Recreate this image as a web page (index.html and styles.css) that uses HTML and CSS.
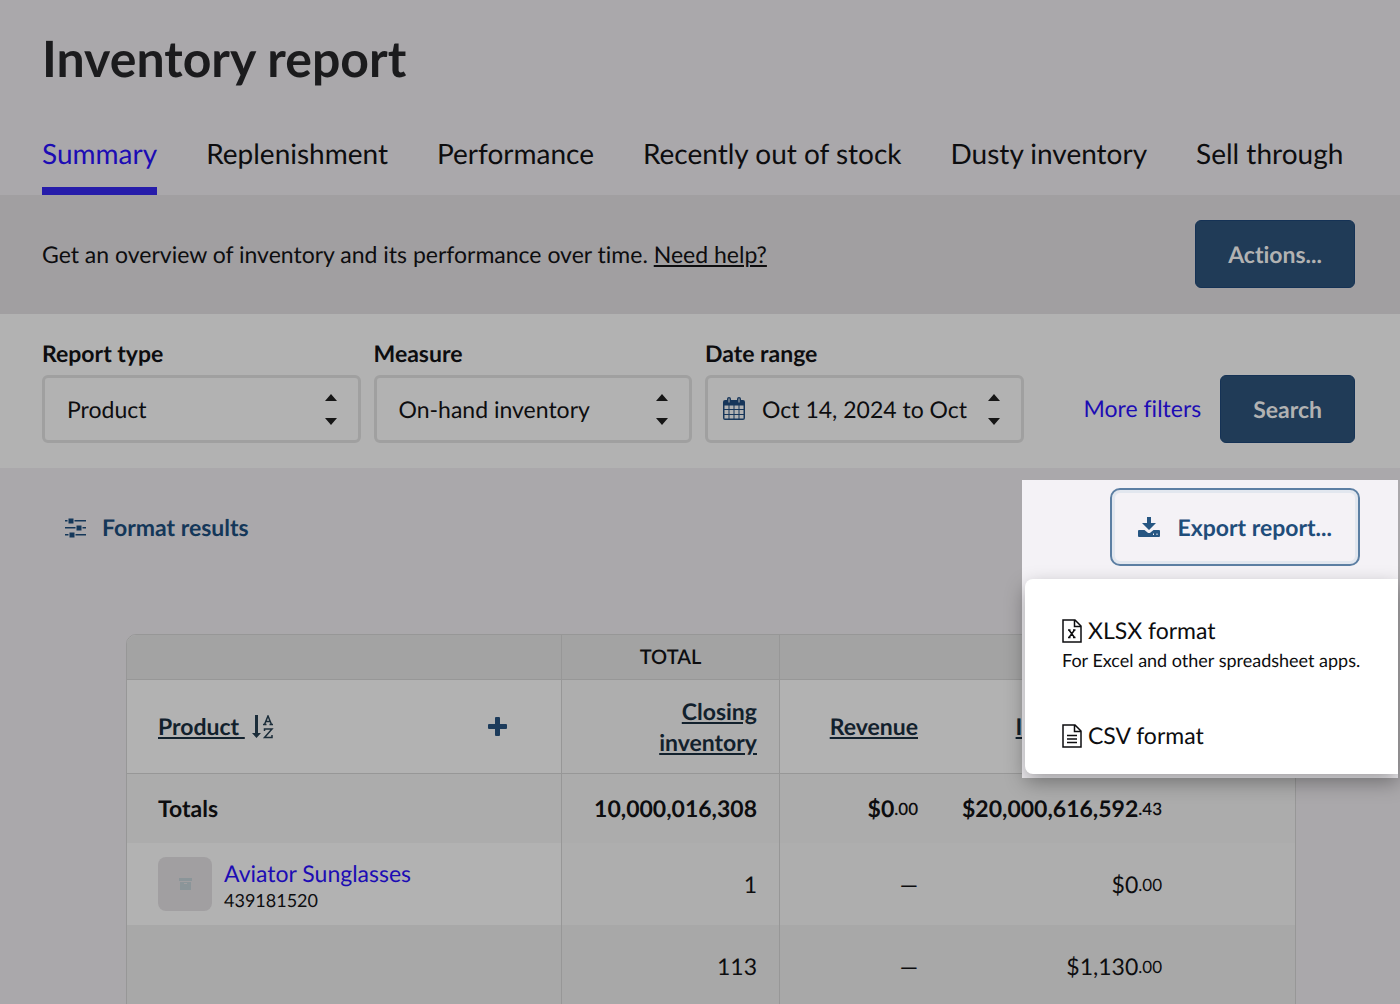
FILE: index.html
```
<!DOCTYPE html>
<html lang="en">
<head>
  <meta charset="UTF-8">
  <meta name="viewport" content="width=device-width, initial-scale=1.0">
  <title>Inventory report</title>
  <link rel="stylesheet" href="styles.css">
</head>
<body>
  <header class="page-header">
    <h1>Inventory report</h1>
    <nav class="tabs">
      <a href="#" class="active">Summary</a>
      <a href="#">Replenishment</a>
      <a href="#">Performance</a>
      <a href="#">Recently out of stock</a>
      <a href="#">Dusty inventory</a>
      <a href="#">Sell through</a>
    </nav>
  </header>

  <section class="intro">
    <p>Get an overview of inventory and its performance over time. <a href="#">Need help?</a></p>
    <button class="btn" type="button">Actions...</button>
  </section>

  <form class="filters">
    <div class="fields">
      <div class="field">
        <label for="report-type">Report type</label>
        <div class="select">
          <select id="report-type"><option>Product</option></select>
          <svg class="arrows" width="12" height="32" viewBox="0 0 12 32"><path d="M0 7L6 0l6 7zM0 24h12l-6 7z"/></svg>
        </div>
      </div>
      <div class="field">
        <label for="measure">Measure</label>
        <div class="select">
          <select id="measure"><option>On-hand inventory</option></select>
          <svg class="arrows" width="12" height="32" viewBox="0 0 12 32"><path d="M0 7L6 0l6 7zM0 24h12l-6 7z"/></svg>
        </div>
      </div>
      <div class="field">
        <label for="date-range">Date range</label>
        <div class="select with-icon">
          <svg class="calendar" width="22" height="24" viewBox="0 0 22 24">
            <path fill-rule="evenodd" d="M2 3h2V2a2 2 0 0 1 4 0v1h6V2a2 2 0 0 1 4 0v1h2a2 2 0 0 1 2 2v16a2 2 0 0 1-2 2H2a2 2 0 0 1-2-2V5a2 2 0 0 1 2-2zM1.500 8.500v3.500h4V8.500zM6.500 8.500v3.500h4V8.500zM11.500 8.500v3.500h4V8.500zM16.500 8.500v3.500h4V8.500zM1.500 13v4h4v-4zM6.500 13v4h4v-4zM11.500 13v4h4v-4zM16.500 13v4h4v-4zM1.500 18v3.500h4V18zM6.500 18v3.500h4V18zM11.500 18v3.500h4V18zM16.500 18v3.500h4V18zM5.500 1.500v4h1v-4zM15.500 1.500v4h1v-4z"/>
          </svg>
          <select id="date-range"><option>Oct 14, 2024 to Oct</option></select>
          <svg class="arrows" width="12" height="32" viewBox="0 0 12 32"><path d="M0 7L6 0l6 7zM0 24h12l-6 7z"/></svg>
        </div>
      </div>
    </div>
    <div class="filter-actions">
      <a href="#">More filters</a>
      <button class="btn" type="button">Search</button>
    </div>
  </form>

  <main class="results">
    <button class="format" type="button">
      <svg width="21" height="20" viewBox="0 0 21 20">
        <path d="M0 2h21v1.500H0zM0 9h21v1.500H0zM0 16h21v1.500H0z"/>
        <path class="knob" d="M3 0h6v6H3zM11 7h6v6h-6zM4 14h6v6H4z"/>
      </svg>
      Format results
    </button>

    <div class="export">
      <button class="export-btn" type="button">
        <svg width="22" height="20" viewBox="0 0 22 20">
          <path d="M9 0h4v6h5l-7 7-7-7h5z"/>
          <path fill-rule="evenodd" d="M1 13h5.500l3 2.500q1.500 1 3 0l3-2.500H21a1 1 0 0 1 1 1v5a1 1 0 0 1-1 1H1a1 1 0 0 1-1-1v-5a1 1 0 0 1 1-1zM15 16.500v1.500H16v-1.500zM18.500 16.500v1.500h1v-1.500z"/>
        </svg>
        Export report...
      </button>
      <div class="menu">
        <a href="#">
          <svg width="20" height="24" viewBox="0 0 20 24">
            <path d="M1 1h12l6 6v16H1zM12.500 1v6.500H19"/>
            <path d="M6 11h2.500M11 11h2.500M6 18.500h2.500M11 18.500h2.500M7 11l5.500 7.500M12.500 11L7 18.500"/>
          </svg>
          XLSX format
        </a>
        <p>For Excel and other spreadsheet apps.</p>
        <a href="#">
          <svg width="20" height="24" viewBox="0 0 20 24">
            <path d="M1 1h12l6 6v16H1zM12.500 1v6.500H19"/>
            <path d="M5 11.500h10M5 15h10M5 18.500h10"/>
          </svg>
          CSV format
        </a>
      </div>
    </div>

    <table>
      <colgroup>
        <col class="col-product">
        <col class="col-closing">
        <col class="col-revenue">
        <col class="col-cost">
        <col class="col-rest">
      </colgroup>
      <thead>
        <tr class="groups">
          <th></th>
          <th>TOTAL</th>
          <th colspan="3"></th>
        </tr>
        <tr class="columns">
          <th>
            <div class="product-head">
              <a href="#">Product&nbsp;</a>
              <svg class="sort" width="22" height="24" viewBox="0 0 22 24">
                <path d="M3 0h3v18h3l-4.500 5L0 18h3z"/>
                <path class="line" d="M12.500 9.500L16 1l3.500 8.500M13.500 6.500h5M11 9.500h3.500M17.500 9.500H21M12.500 16v-2H20l-7.500 8.500H20v-2.500"/>
              </svg>
              <button class="add" type="button" aria-label="Add column">
                <svg width="19" height="19" viewBox="0 0 19 19"><path d="M8 0h3a1 1 0 0 1 1 1v6h6a1 1 0 0 1 1 1v3a1 1 0 0 1-1 1h-6v6a1 1 0 0 1-1 1H8a1 1 0 0 1-1-1v-6H1a1 1 0 0 1-1-1V8a1 1 0 0 1 1-1h6V1a1 1 0 0 1 1-1z"/></svg>
              </button>
            </div>
          </th>
          <th><a href="#">Closing<br>inventory</a></th>
          <th><a href="#">Revenue</a></th>
          <th><a href="#">Inventory cost</a></th>
          <th></th>
        </tr>
      </thead>
      <tbody>
        <tr class="totals">
          <th>Totals</th>
          <td>10,000,016,308</td>
          <td>$0<small>.00</small></td>
          <td>$20,000,616,592<small>.43</small></td>
          <td></td>
        </tr>
        <tr>
          <td>
            <div class="product">
              <span class="thumb">
                <svg width="13" height="12" viewBox="0 0 13 12"><path fill-rule="evenodd" d="M0 0h13v3H0zM1 4h11v8H1zM5 5v1h3V5z"/></svg>
              </span>
              <div>
                <a href="#">Aviator Sunglasses</a>
                <span class="sku">439181520</span>
              </div>
            </div>
          </td>
          <td>1</td>
          <td>—</td>
          <td>$0<small>.00</small></td>
          <td></td>
        </tr>
        <tr class="alt">
          <td></td>
          <td>113</td>
          <td>—</td>
          <td>$1,130<small>.00</small></td>
          <td></td>
        </tr>
      </tbody>
    </table>
  </main>
</body>
</html>
```
FILE: styles.css
```
* {
  box-sizing: border-box;
}

body {
  margin: 0;
  font-family: Lato, "Liberation Sans", sans-serif;
  font-size: 23px;
  line-height: 31px;
  font-variant-ligatures: none;
  text-rendering: geometricPrecision;
  color: #0d0d0f;
  background-color: #aaa8ab;
}

button, select {
  font: inherit;
  font-variant-ligatures: none;
  text-rendering: geometricPrecision;
  color: inherit;
}

a {
  color: #1c0cb4;
  text-decoration: none;
}

svg {
  display: block;
  flex-shrink: 0;
}

.page-header {
  padding: 26px 42px 0;
}

h1 {
  margin: 0;
  font-size: 50px;
  line-height: 64px;
  font-weight: 700;
  color: #1b1b1d;
}

.tabs {
  display: flex;
  gap: 49px;
  margin-top: 44px;
  font-size: 28px;
  line-height: 38px;
  white-space: nowrap;
}

.tabs a {
  height: 61px;
  color: #0d0d0f;
}

.tabs .active {
  color: #1c0cb4;
  border-bottom: 8px solid #261caa;
}

.intro {
  display: flex;
  align-items: center;
  justify-content: space-between;
  padding: 25px 45px 26px 42px;
  background-color: #a19fa1;
}

.intro p {
  margin: 0;
}

.intro p a {
  color: #0d0d0f;
  text-decoration: underline;
}

.btn {
  height: 68px;
  padding: 0 32px;
  border: 1px solid #153255;
  border-radius: 6px;
  background-color: #203b57;
  color: #b2b2b2;
  font-weight: 700;
}

.filters {
  display: flex;
  align-items: flex-end;
  gap: 60px;
  padding: 24px 45px 25px 42px;
  background-color: #b2b2b2;
}

.fields {
  display: flex;
  flex: 1;
  gap: 13px;
}

.field {
  flex: 1;
  min-width: 0;
}

.field label {
  display: block;
  margin-bottom: 6px;
  font-weight: 700;
}

.select {
  position: relative;
}

.select select {
  display: block;
  width: 100%;
  height: 68px;
  padding: 0 48px 0 22px;
  border: 3px solid #a0a0a0;
  border-radius: 6px;
  background: none;
  appearance: none;
}

.with-icon select {
  padding-left: 54px;
}

.arrows {
  position: absolute;
  top: 19px;
  right: 24px;
  fill: #161616;
}

.calendar {
  position: absolute;
  top: 22px;
  left: 18px;
  fill: #17365a;
}

.filter-actions {
  display: flex;
  align-items: center;
  gap: 19px;
}

.filter-actions a {
  padding: 18px 0 19px;
}

.results {
  position: relative;
  padding: 44px 104px 0 65px;
}

.format {
  display: flex;
  align-items: center;
  gap: 16px;
  padding: 0;
  border: 0;
  background: none;
  color: #143759;
  font-weight: 700;
}

.format svg {
  fill: #143759;
}

.format .knob {
  stroke: #aaa8ab;
  stroke-width: 1;
}

/* highlighted export menu, open over the results */
.export {
  position: absolute;
  top: 12px;
  right: 2px;
  width: 376px;
  height: 298px;
  padding: 8px 0 0 3px;
  background-color: #f4f2f6;
}

.export-btn {
  display: flex;
  align-items: center;
  gap: 17px;
  height: 78px;
  margin: 0 38px 13px auto;
  padding: 0 26px;
  border: 2px solid #5c7fa3;
  border-radius: 10px;
  box-shadow: inset 0 0 0 3px #e2e7ef;
  background-color: #f4f2f6;
  color: #1f4d7a;
  font-weight: 700;
}

.export-btn svg {
  fill: #265682;
}

.menu {
  height: 195px;
  padding: 36px 30px 0 37px;
  border-radius: 8px 0 0 8px;
  background-color: #fff;
  box-shadow: 0 8px 20px rgba(0, 0, 0, 0.35);
}

.menu a {
  display: flex;
  align-items: center;
  gap: 6px;
  color: #0d0d0f;
}

.menu svg {
  fill: none;
  stroke: #0d0d0f;
  stroke-width: 1.5;
}

.menu p {
  margin: 0 0 46px;
  font-size: 18px;
  line-height: 28px;
  white-space: nowrap;
}

table {
  width: calc(100% - 61px);
  margin: 91px 0 0 61px;
  table-layout: fixed;
  border: 1px solid #979797;
  border-radius: 10px 10px 0 0;
  border-spacing: 0;
  overflow: hidden;
  background-color: #b2b2b2;
}

.col-product {
  width: 435px;
}

.col-closing {
  width: 218px;
}

.col-revenue {
  width: 160px;
}

.col-cost {
  width: 244px;
}

th, td {
  padding: 0 22px 0 0;
  text-align: right;
  white-space: nowrap;
}

th:first-child, td:first-child {
  padding-left: 31px;
  text-align: left;
}

th:first-child, td:first-child,
th:nth-child(2), td:nth-child(2) {
  border-right: 1px solid #979797;
}

thead th {
  border-bottom: 1px solid #979797;
  font-weight: 700;
}

thead a {
  color: #12212d;
  text-decoration: underline;
}

.groups th {
  height: 45px;
  padding: 0;
  background-color: #a3a3a3;
  font-size: 20px;
  font-weight: 600;
  text-align: center;
}

.columns th {
  height: 94px;
}

.columns th:nth-child(2), td {
  background-color: #aeaeae;
}

td:first-child {
  background-color: #b2b2b2;
}

.product-head {
  display: flex;
  align-items: center;
}

.sort {
  margin-left: 7px;
  fill: #1b2d3a;
}

.sort .line {
  fill: none;
  stroke: #1b2d3a;
  stroke-width: 1.5;
}

.add {
  margin: 0 32px 0 auto;
  padding: 0;
  border: 0;
  background: none;
}

.add svg {
  fill: #1c3b5b;
}

tbody tr {
  height: 82px;
}

.totals {
  height: 69px;
}

.totals th, .totals td {
  background-color: #acacac;
  font-weight: 700;
}

.alt td {
  background-color: #a8a8a8;
}

small {
  font-size: 17px;
  vertical-align: 2px;
  line-height: 1;
}

.totals small {
  font-weight: 600;
}

.product {
  display: flex;
  align-items: center;
  gap: 12px;
}

.thumb {
  display: flex;
  align-items: center;
  justify-content: center;
  width: 54px;
  height: 54px;
  border-radius: 8px;
  background-color: #a19fa1;
}

.thumb svg {
  fill: #8b9599;
}

.sku {
  display: block;
  font-size: 18px;
  line-height: 22px;
}
```
